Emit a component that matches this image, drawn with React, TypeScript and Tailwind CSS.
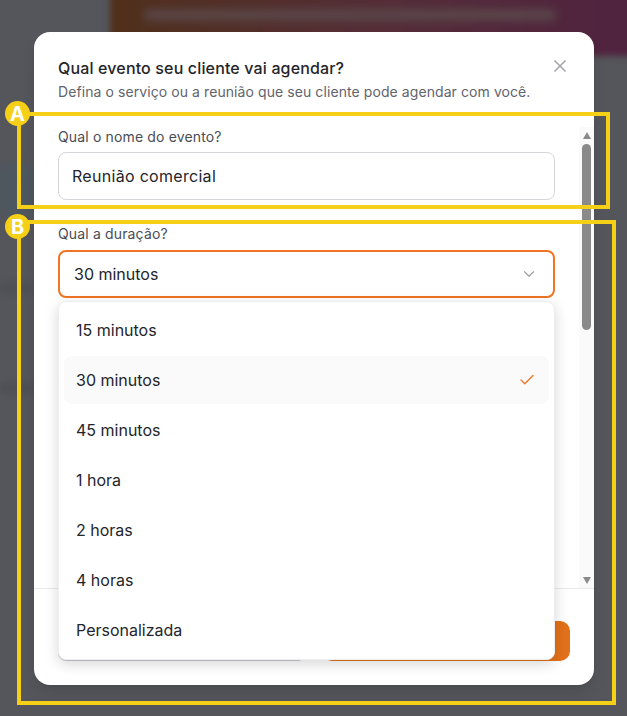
import { Check, ChevronDown, X } from "lucide-react";

const options = ["15 minutos", "30 minutos", "45 minutos", "1 hora", "2 horas", "4 horas", "Personalizada"];

export default function App() {
  return (
    <div className="relative w-[627px] h-[716px] overflow-hidden bg-[#54565b] font-['Inter',sans-serif] text-[#24252b]">
      {/* fundo desfocado */}
      <div className="absolute inset-0 overflow-hidden">
        <div className="absolute left-[110px] -top-4 w-[560px] h-[72px] blur-[3px] bg-gradient-to-r from-[#50301a] via-[#552d38] to-[#4f2140]" />
        <div className="absolute left-[145px] top-[10px] w-[410px] h-[10px] blur-[5px] bg-[#5a4a4c]" />
        <div className="absolute left-0 top-[165px] w-[34px] h-[50px] blur-[6px] bg-[#4c5760]" />
        <div className="absolute left-0 top-[285px] w-[34px] h-[6px] blur-[4px] bg-[#494a4f]" />
        <div className="absolute left-0 top-[385px] w-[34px] h-[6px] blur-[4px] bg-[#494a4f]" />
      </div>

      <div className="relative pt-8 pl-[34px]">
        <div className="relative w-[560px] h-[653px] bg-white rounded-[16px] flex flex-col shadow-lg">
          <div className="relative h-[95px] shrink-0 px-6 pt-[26px]">
            <h2 className="text-[16px] leading-5 font-medium tracking-[0.15px]">Qual evento seu cliente vai agendar?</h2>
            <p className="mt-[5px] text-[14px] leading-[18px] text-[#62646c] tracking-[0.08px]">
              Defina o serviço ou a reunião que seu cliente pode agendar com você.
            </p>
            <button className="absolute right-[24px] top-[24px] text-[#a3a5aa]">
              <X size={20} strokeWidth={2} />
            </button>
          </div>

          <div className="flex h-[462px] shrink-0 border-b border-[#e9e9eb]">
            <div className="flex-1 pl-6 pr-[24px] pt-[1px]">
              <label className="block text-[14px] leading-[18px] text-[#4a4c54] tracking-[0.15px]">Qual o nome do evento?</label>
              <div className="mt-[6px] h-12 flex items-center px-[13px] rounded-[8px] border border-[#d6d6da] text-[16px] tracking-[0.3px]">
                Reunião comercial
              </div>
              <label className="block mt-[25px] text-[14px] leading-[18px] text-[#4a4c54] tracking-[0.15px]">Qual a duração?</label>
              <div className="mt-[7px] h-12 flex items-center justify-between pl-[14px] pr-[15px] rounded-[8px] border-2 border-[#f07423] text-[16px]">
                30 minutos
                <ChevronDown size={18} strokeWidth={1.5} className="text-[#9a9ca2]" />
              </div>
            </div>
            {/* barra de rolagem */}
            <div className="w-[15px] flex flex-col items-center bg-[#fafafa] pt-[5px] pb-[4px]">
              <div className="w-0 h-0 border-x-[4px] border-x-transparent border-b-[7px] border-b-[#8a8a8a]" />
              <div className="mt-[5px] w-[9px] h-[186px] rounded-full bg-[#8a8a8a]" />
              <div className="mt-auto w-0 h-0 border-x-[4px] border-x-transparent border-t-[7px] border-t-[#8a8a8a]" />
            </div>
          </div>

          <div className="flex-1 flex gap-4 px-6 pt-[32px]">
            <div className="w-[248px] h-[40px] rounded-[8px] border border-[#c9c9cf] bg-white" />
            <div className="w-[248px] h-[40px] rounded-[10px] bg-[#e37119]" />
          </div>

          {/* lista do select */}
          <div className="absolute left-6 top-[269px] w-[497px] h-[359px] bg-white rounded-[8px] border border-[#eeeef0] shadow-[0_4px_14px_rgba(0,0,0,0.16)] px-[5px] pt-[4px]">
            {options.map((opt) => (
              <div
                key={opt}
                className={`h-[48px] mb-[2px] flex items-center justify-between pl-[12px] pr-[13px] rounded-[8px] text-[16px] ${
                  opt === "30 minutos" ? "bg-[#fafafa]" : ""
                }`}
              >
                {opt}
                {opt === "30 minutos" && <Check size={18} strokeWidth={1.75} className="text-[#f07423]" />}
              </div>
            ))}
          </div>
        </div>
      </div>

      {/* marcações A e B */}
      <div className="absolute left-[17px] top-[112px] w-[593px] h-[97px] border-[4px] border-[#f5d016]" />
      <div className="absolute left-[17px] top-[220px] w-[599px] h-[485px] border-[4px] border-[#f5d016]" />
      <div className="absolute left-[5px] top-[101px] w-[25px] h-[25px] rounded-full bg-[#f5d016] flex items-center justify-center text-white font-bold text-[20px] leading-none">
        A
      </div>
      <div className="absolute left-[5px] top-[214px] w-[25px] h-[25px] rounded-full bg-[#f5d016] flex items-center justify-center text-white font-bold text-[20px] leading-none">
        B
      </div>
    </div>
  );
}
